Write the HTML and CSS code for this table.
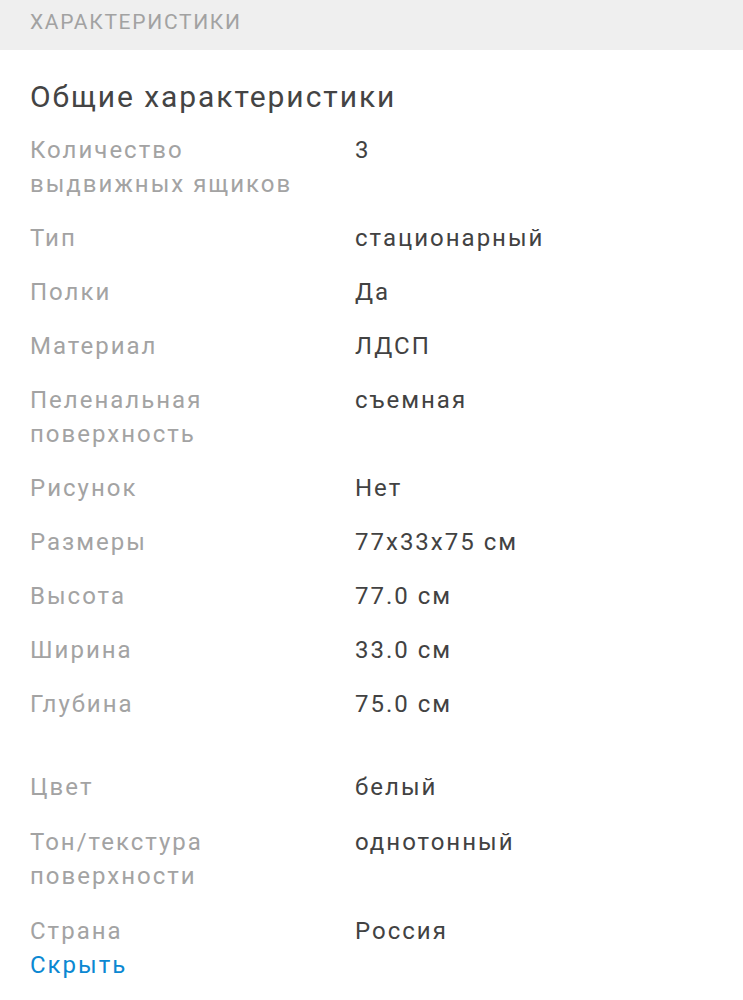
FILE: index.html
```html
<!DOCTYPE html>
<html lang="ru">
<head>
<meta charset="utf-8">
<link rel="stylesheet" href="styles.css">
</head>
<body>
<div class="section-head">ХАРАКТЕРИСТИКИ</div>
<div class="content">
  <h2 class="title">Общие характеристики</h2>
  <div class="group">
    <div class="row"><div class="label">Количество выдвижных ящиков</div><div class="value">3</div></div>
    <div class="row"><div class="label">Тип</div><div class="value">стационарный</div></div>
    <div class="row"><div class="label">Полки</div><div class="value">Да</div></div>
    <div class="row"><div class="label">Материал</div><div class="value">ЛДСП</div></div>
    <div class="row"><div class="label">Пеленальная поверхность</div><div class="value">съемная</div></div>
    <div class="row"><div class="label">Рисунок</div><div class="value">Нет</div></div>
    <div class="row"><div class="label">Размеры</div><div class="value">77x33x75 см</div></div>
    <div class="row"><div class="label">Высота</div><div class="value">77.0 см</div></div>
    <div class="row"><div class="label">Ширина</div><div class="value">33.0 см</div></div>
    <div class="row"><div class="label">Глубина</div><div class="value">75.0 см</div></div>
  </div>
  <div class="group group-next">
    <div class="row"><div class="label">Цвет</div><div class="value">белый</div></div>
    <div class="row"><div class="label">Тон/текстура поверхности</div><div class="value">однотонный</div></div>
    <div class="row"><div class="label">Страна</div><div class="value">Россия</div></div>
  </div>
  <a class="toggle" href="#">Скрыть</a>
</div>
</body>
</html>
```
FILE: styles.css
```css
html, body {
  margin: 0;
  padding: 0;
  background: #ffffff;
  font-family: Roboto, "Noto Sans", sans-serif;
}
.section-head {
  height: 50px;
  box-sizing: border-box;
  padding: 0 30px;
  line-height: 44px;
  background: #efefef;
  color: #a2a2a2;
  font-size: 21px;
  letter-spacing: 1.7px;
}
.content {
  padding: 27px 30px 0;
}
.title {
  margin: 0 0 16px;
  font-size: 30px;
  line-height: 40px;
  font-weight: 400;
  color: #444444;
  letter-spacing: 1.95px;
}
.group {
  display: flex;
  flex-direction: column;
  gap: 20px;
}
.group + .group-next {
  margin-top: 49px;
}
.group-next .row + .row {
  margin-top: 1px;
}
.row {
  display: grid;
  grid-template-columns: 325px 1fr;
  font-size: 24px;
  line-height: 34px;
  letter-spacing: 2px;
}
.label {
  color: #a3a3a3;
  max-width: 280px;
}
.value {
  color: #424242;
}
.toggle {
  display: block;
  font-size: 24px;
  line-height: 34px;
  letter-spacing: 2px;
  color: #0b88d2;
  text-decoration: none;
}
```
